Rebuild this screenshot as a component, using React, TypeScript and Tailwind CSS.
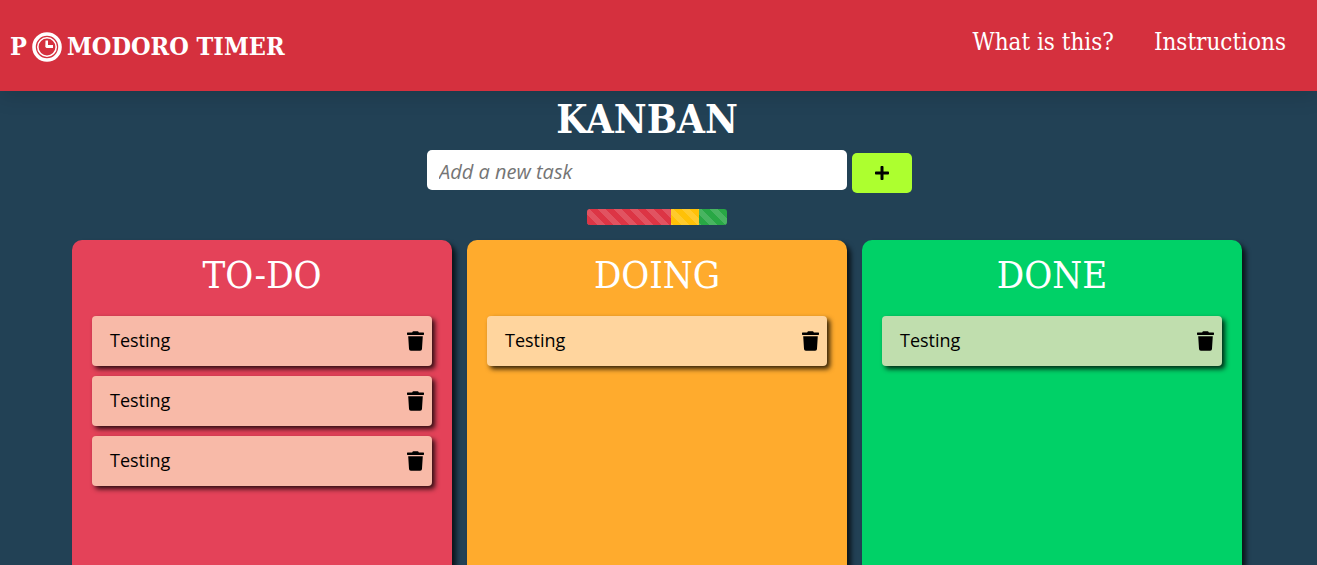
import React from "react";
import { FaPlus, FaTrash } from "react-icons/fa";

type ColumnData = {
  title: string;
  panel: string;
  card: string;
  tasks: string[];
};

const columns: ColumnData[] = [
  { title: "TO-DO", panel: "bg-[#e44259]", card: "bg-[#f8baa8]", tasks: ["Testing", "Testing", "Testing"] },
  { title: "DOING", panel: "bg-[#ffab2d]", card: "bg-[#ffd59e]", tasks: ["Testing"] },
  { title: "DONE", panel: "bg-[#00d167]", card: "bg-[#c0deae]", tasks: ["Testing"] },
];

const stripes =
  "bg-[linear-gradient(45deg,rgba(255,255,255,.15)_25%,transparent_25%,transparent_50%,rgba(255,255,255,.15)_50%,rgba(255,255,255,.15)_75%,transparent_75%,transparent)] bg-[length:16px_16px] bg-[position:10px_0]";

const slab = "font-['Roboto_Slab','DejaVu_Serif_Condensed','DejaVu_Serif',serif]";

function ClockLogo() {
  return (
    <svg viewBox="0 0 30 30" className="h-[30px] w-[30px]" aria-hidden="true">
      <circle cx="15" cy="15" r="13" fill="none" stroke="white" strokeWidth="3.6" />
      <circle cx="15" cy="15" r="9.200" fill="none" stroke="white" strokeWidth="1.6" />
      <path d="M13.500 8.500h2.500v4.500h5v3h-6.500l-1.200-1z" fill="white" />
    </svg>
  );
}

function Column({ title, panel, card, tasks }: ColumnData) {
  return (
    <section className={`flex flex-1 flex-col rounded-t-[10px] px-5 pt-[11px] shadow-[4px_4px_5px_rgba(0,0,0,0.7)] ${panel}`}>
      <h2 className={`text-center text-[38px] leading-[48px] text-white ${slab}`}>{title}</h2>
      <ul className="mt-[17px] flex flex-col gap-[10px]">
        {tasks.map((task, i) => (
          <li
            key={i}
            className={`flex h-[50px] items-center justify-between rounded pr-2 pb-[2px] pl-[18px] text-[18px] text-black shadow-[3px_3px_5px_rgba(0,0,0,0.8)] ${card}`}
          >
            <span>{task}</span>
            <button type="button" aria-label="Delete task" className="pt-[2px]">
              <FaTrash className="h-5 w-[17px]" />
            </button>
          </li>
        ))}
      </ul>
    </section>
  );
}

export default function App() {
  return (
    <div className="flex min-h-screen flex-col bg-[#224155] font-['Segoe_UI','Open_Sans',sans-serif]">
      <header
        className={`flex h-[91px] items-start justify-between bg-[#d5303e] pr-[31px] pl-[10px] text-white shadow-[0_4px_20px_rgba(0,0,0,0.15)] ${slab}`}
      >
        <a href="#" aria-label="Pomodoro Timer" className="mt-[32px] flex items-center gap-[5px] text-[25px] leading-[30px] font-bold">
          <span>P</span>
          <ClockLogo />
          <span>MODORO TIMER</span>
        </a>
        <nav className="mt-[26px] flex gap-10 text-[24px] leading-8">
          <a href="#about">What is this?</a>
          <a href="#instructions">Instructions</a>
        </nav>
      </header>
      <main className="flex flex-1 flex-col items-center pr-[3px]">
        <h1 className={`mt-1 pr-5 text-[40px] leading-[48px] font-bold text-white ${slab}`}>KANBAN</h1>
        <form className="mt-[7px] flex items-start gap-[5px] pl-[25px]" onSubmit={(e) => e.preventDefault()}>
          <input
            type="text"
            aria-label="New task"
            placeholder="Add a new task"
            className="h-10 w-[420px] rounded-[5px] bg-white px-3 pt-[2px] text-[20px] text-black placeholder:text-[#757575] placeholder:italic"
          />
          <button type="submit" aria-label="Add task" className="mt-[3px] flex h-10 w-[60px] items-center justify-center rounded-[5px] bg-[#adff2f] text-black">
            <FaPlus className="h-4 w-[14px]" />
          </button>
        </form>
        <div className="mt-4 flex h-4 w-[140px] overflow-hidden rounded-[3px]">
          <div className={`w-3/5 bg-[#dc3545] ${stripes}`} />
          <div className={`w-1/5 bg-[#ffc107] ${stripes}`} />
          <div className={`w-1/5 bg-[#28a745] ${stripes}`} />
        </div>
        <div className="mt-[15px] flex w-full max-w-[1170px] flex-1 gap-[15px]">
          {columns.map((column) => (
            <Column key={column.title} {...column} />
          ))}
        </div>
      </main>
    </div>
  );
}
